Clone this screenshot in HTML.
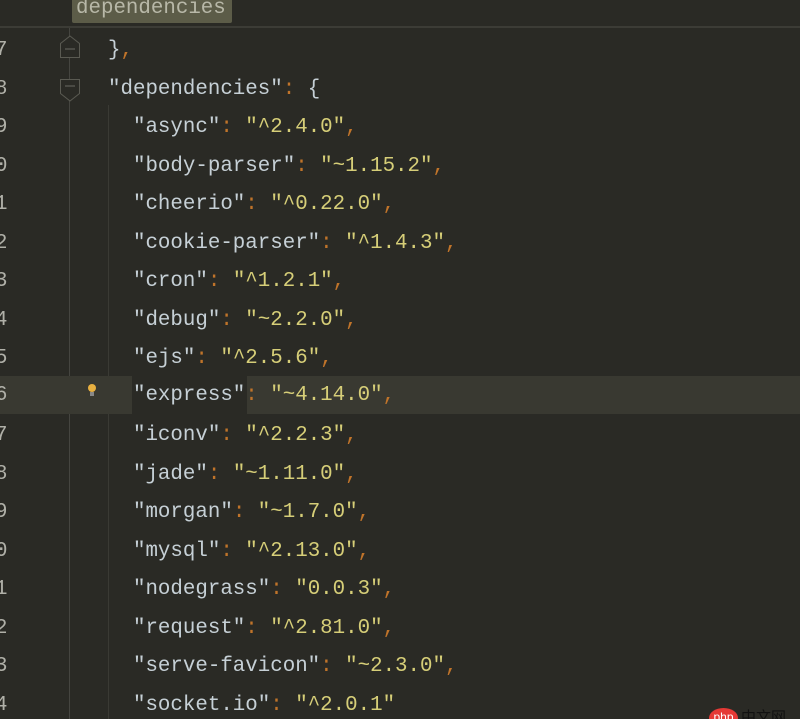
<!DOCTYPE html>
<html><head><meta charset="utf-8"><style>
html,body{margin:0;width:800px;height:719px;overflow:hidden}
body{background:#2a2a25;position:relative;font-family:"Liberation Mono",monospace;font-size:20.8px;}
.hdr{position:absolute;left:0;top:0;width:800px;height:26px;background:#2a2a25;border-bottom:2px solid #3c3c36;}
.tag{position:absolute;left:72px;top:0;width:160px;height:23px;background:#5c5c48;color:#b8b8a8;font-size:20.8px;line-height:17px;padding-left:4px;box-sizing:border-box;border-radius:0 0 2px 2px;overflow:hidden}
.gut{position:absolute;left:69px;top:28px;width:1px;height:691px;background:#454540}
.ind{position:absolute;left:108px;top:105px;width:1px;height:614px;background:#3a3a34}
.hl{position:absolute;top:376px;height:38px;background:#393931}
.row{position:absolute;left:0;width:800px;height:38.5px;line-height:38.5px;white-space:pre;color:#c6d0d6;overflow:hidden}
.n{position:absolute;left:-5px;color:#b0b0a8}
.t{position:absolute;left:108px}
.k{color:#c6d0d6}.v{color:#d6ce78}.p{color:#c0742a}
</style></head><body>
<div class="hdr"></div>
<div class="tag">dependencies</div>
<div class="gut"></div>
<div class="ind"></div>
<div class="hl" style="left:0;width:132px"></div>
<div class="hl" style="left:247px;width:553px"></div>
<svg style="position:absolute;left:59px;top:34px" width="22" height="70"><g fill="#2a2a25" stroke="#5a5a52" stroke-width="1"><path d="M1.5 23.5V9.5L11 2L20.5 9.5V23.5Z"/><path d="M1.5 45.5H20.5V59.5L11 67L1.5 59.5Z"/></g><path d="M6 15H16M6 52H16" stroke="#6a6a62"/></svg>
<svg style="position:absolute;left:87px;top:383px" width="10" height="14"><circle cx="5" cy="5" r="4" fill="#e8b040"/><rect x="3" y="9" width="4" height="4" fill="#888"/></svg>
<div class="row" style="top:32px"><span class="n">7</span><span class="t">}<span class="p">,</span></span></div>
<div class="row" style="top:70.5px"><span class="n">8</span><span class="t">"dependencies"<span class="p">:</span> {</span></div>
<div class="row" style="top:109px"><span class="n">9</span><span class="t">  "async"<span class="p">:</span> <span class="v">"^2.4.0"</span><span class="p">,</span></span></div>
<div class="row" style="top:147.5px"><span class="n">0</span><span class="t">  "body-parser"<span class="p">:</span> <span class="v">"~1.15.2"</span><span class="p">,</span></span></div>
<div class="row" style="top:186px"><span class="n">1</span><span class="t">  "cheerio"<span class="p">:</span> <span class="v">"^0.22.0"</span><span class="p">,</span></span></div>
<div class="row" style="top:224.5px"><span class="n">2</span><span class="t">  "cookie-parser"<span class="p">:</span> <span class="v">"^1.4.3"</span><span class="p">,</span></span></div>
<div class="row" style="top:263px"><span class="n">3</span><span class="t">  "cron"<span class="p">:</span> <span class="v">"^1.2.1"</span><span class="p">,</span></span></div>
<div class="row" style="top:301.5px"><span class="n">4</span><span class="t">  "debug"<span class="p">:</span> <span class="v">"~2.2.0"</span><span class="p">,</span></span></div>
<div class="row" style="top:340px"><span class="n">5</span><span class="t">  "ejs"<span class="p">:</span> <span class="v">"^2.5.6"</span><span class="p">,</span></span></div>
<div class="row" style="top:376.5px"><span class="n">6</span><span class="t">  "express"<span class="p">:</span> <span class="v">"~4.14.0"</span><span class="p">,</span></span></div>
<div class="row" style="top:417px"><span class="n">7</span><span class="t">  "iconv"<span class="p">:</span> <span class="v">"^2.2.3"</span><span class="p">,</span></span></div>
<div class="row" style="top:455.5px"><span class="n">8</span><span class="t">  "jade"<span class="p">:</span> <span class="v">"~1.11.0"</span><span class="p">,</span></span></div>
<div class="row" style="top:494px"><span class="n">9</span><span class="t">  "morgan"<span class="p">:</span> <span class="v">"~1.7.0"</span><span class="p">,</span></span></div>
<div class="row" style="top:532.5px"><span class="n">0</span><span class="t">  "mysql"<span class="p">:</span> <span class="v">"^2.13.0"</span><span class="p">,</span></span></div>
<div class="row" style="top:571px"><span class="n">1</span><span class="t">  "nodegrass"<span class="p">:</span> <span class="v">"0.0.3"</span><span class="p">,</span></span></div>
<div class="row" style="top:609.5px"><span class="n">2</span><span class="t">  "request"<span class="p">:</span> <span class="v">"^2.81.0"</span><span class="p">,</span></span></div>
<div class="row" style="top:648px"><span class="n">3</span><span class="t">  "serve-favicon"<span class="p">:</span> <span class="v">"~2.3.0"</span><span class="p">,</span></span></div>
<div class="row" style="top:686.5px;height:32.5px"><span class="n">4</span><span class="t">  "socket.io"<span class="p">:</span> <span class="v">"^2.0.1"</span></span></div>
<div style="position:absolute;left:709px;top:708px;width:29px;height:11px;overflow:hidden"><div style="width:29px;height:20px;border-radius:50%;background:#e53935;color:#fff;font:12px 'Liberation Sans',sans-serif;text-align:center;line-height:18px">php</div></div>
<div style="position:absolute;left:741px;top:706px;height:13px;overflow:hidden;color:#111;font:15px 'Liberation Sans','Noto Sans CJK SC',sans-serif">中文网</div>
</body></html>
